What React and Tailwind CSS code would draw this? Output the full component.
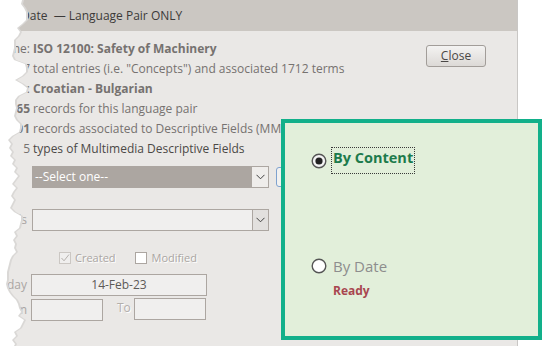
import React from 'react';

const edge = [
  [0, 22], [4, 21], [8, 24], [12, 26], [16, 26], [20, 26], [24, 22], [28, 17], [32, 20], [36, 18],
  [40, 14], [44, 14], [48, 14], [52, 13], [56, 12], [60, 14], [64, 25], [68, 26], [72, 26], [76, 22],
  [80, 15], [84, 22], [88, 27], [92, 26], [96, 18], [100, 15], [104, 15], [108, 16], [112, 15], [116, 14],
  [120, 16], [124, 20], [128, 20], [132, 19], [136, 12], [140, 8], [144, 11], [148, 9], [152, 12], [156, 10],
  [160, 14], [164, 12], [168, 16], [172, 14], [176, 18], [180, 15], [184, 12], [188, 16], [192, 13], [196, 11],
  [200, 14], [204, 12], [208, 10], [212, 14], [216, 21], [220, 21], [224, 20], [228, 19], [232, 14], [236, 16],
  [240, 13], [244, 15], [248, 14], [252, 16], [256, 12], [260, 10], [264, 9], [268, 8], [272, 7], [276, 7],
  [280, 7], [284, 6], [288, 7], [292, 9], [296, 12], [300, 16], [304, 18], [308, 19], [312, 21], [316, 18],
  [320, 24], [324, 22], [328, 20], [332, 14], [336, 16], [340, 12], [344, 15], [346, 14],
];

const tornPoints = (dx) =>
  ['0,0', ...edge.map(([y, x]) => `${x + dx},${y}`), '0,346'].join(' ');

// little chevron used in the combo boxes
const Chevron = () => (
  <svg width="9" height="6" viewBox="0 0 9 6">
    <polyline points="0.5,0.8 4.5,4.8 8.5,0.8" fill="none" stroke="#404040" strokeWidth="1" />
  </svg>
);

const Row = ({ label, labelBold, children, dark }) => (
  <div className="flex h-[20px] items-center whitespace-nowrap">
    <div className={`flex w-[30px] justify-end ${labelBold ? 'font-bold' : ''}`}>{label}</div>
    <div className={`pl-[3px] ${dark ? 'text-[#4b4847]' : ''}`}>{children}</div>
  </div>
);

const App = () => {
  return (
    <div className="relative h-[346px] w-[542px] overflow-hidden bg-white font-['Open_Sans',sans-serif]">
      {/* dialog */}
      <div className="flex h-[346px] w-[518px] flex-col border-r border-[#c9c7c5] bg-[#eae8e6]">
        <div className="flex h-[31px] shrink-0 items-center whitespace-nowrap bg-[#cbc7c2] pl-[21px] text-[12px] text-[#3c3a39]">
          Date &nbsp;— Language Pair ONLY
        </div>

        <div className="flex flex-1">
          <div className="flex-1 pt-[8px] text-[12px] text-[#767270]">
            <Row label="Name:">
              <span className="font-bold">ISO 12100: Safety of Machinery</span>
            </Row>
            <Row label="1047">total entries (i.e. "Concepts") and associated 1712 terms</Row>
            <Row label="Pair:">
              <span className="font-bold">Croatian - Bulgarian</span>
            </Row>
            <Row label="865" labelBold>records for this language pair</Row>
            <Row label="101" labelBold>records associated to Descriptive Fields (MM objects)</Row>
            <Row label="5" dark>types of Multimedia Descriptive Fields</Row>

            <div className="ml-[32px] mt-[7px] flex items-center">
              <div className="flex h-[22px] w-[237px] items-center justify-between border border-[#aca6a1] bg-[#aca6a1] pl-[2px] text-white">
                <span>--Select one--</span>
                <div className="flex h-[20px] w-[16px] items-center justify-center bg-[#efedeb]">
                  <Chevron />
                </div>
              </div>
              <div className="ml-[7px] h-[20px] w-[20px] rounded-[3px] border border-[#7fa2cf] bg-[#f2f1f0]" />
            </div>

            <div className="mt-[21px] flex items-center">
              <div className="flex w-[27px] justify-end text-[#a9a5a2]">Fields</div>
              <div className="ml-[5px] flex h-[22px] w-[237px] items-center justify-end border border-[#aca6a1] bg-[#f0efee]">
                <div className="flex h-[20px] w-[16px] items-center justify-center border-l border-[#aca6a1] bg-[#e2e0de]">
                  <Chevron />
                </div>
              </div>
            </div>

            <div className="mt-[21px] flex h-[12px] items-center text-[11px] text-[#aaa6a3] [text-shadow:1px_1px_0_#ffffff]">
              <div className="ml-[59px] flex h-[12px] w-[12px] items-center justify-center border border-[#cbc7c3] bg-[#f0efee]">
                <svg width="10" height="10" viewBox="0 0 10 10">
                  <polyline points="1.5,5 4,7.8 9,1.5" fill="none" stroke="#b5b1ad" strokeWidth="1" />
                </svg>
              </div>
              <span className="ml-[4px]">Created</span>
              <div className="ml-[19px] h-[12px] w-[12px] border border-[#aca6a1] bg-white" />
              <span className="ml-[5px]">Modified</span>
            </div>

            <div className="mt-[10px] flex items-center">
              <div className="flex w-[27px] justify-end text-[#aaa6a3]">Today</div>
              <div className="ml-[4px] flex h-[22px] w-[176px] items-center justify-center border border-[#aca6a1] bg-[#f0efee] text-[#5d5a58]">
                14-Feb-23
              </div>
            </div>

            <div className="mt-[3px] flex items-start">
              <div className="flex h-[22px] w-[27px] items-center justify-end text-[#aaa6a3]">From</div>
              <div className="ml-[4px] h-[22px] w-[72px] border border-[#aca6a1] bg-[#f0efee]" />
              <div className="ml-[14px] flex h-[18px] items-center text-[#b3afab] [text-shadow:1px_1px_0_#ffffff]">To</div>
              <div className="ml-[3px] -mt-px h-[22px] w-[72px] border border-[#aca6a1] bg-[#f0efee]" />
            </div>
          </div>

          <div className="pr-[31px] pt-[11px]">
            <button className="h-[22px] w-[60px] rounded-[3px] border border-[#a29d99] bg-gradient-to-b from-[#f4f3f2] to-[#dcd9d6] text-[12px] text-[#4a4746]">
              <span className="underline">C</span>lose
            </button>
          </div>
        </div>
      </div>

      {/* torn left edge */}
      <svg className="absolute left-0 top-0" width="40" height="346" viewBox="0 0 40 346">
        <polygon points={tornPoints(2)} fill="#dad8d6" />
        <polygon points={tornPoints(0)} fill="#ffffff" />
      </svg>

      {/* highlighted option box */}
      <div className="absolute left-[281px] top-[119px] h-[221px] w-[261px] border-4 border-[#12b08a] bg-[#e2efda]">
        <div className="ml-[26px] mt-[24px] flex items-center">
          <svg width="16" height="16" viewBox="0 0 16 16">
            <circle cx="8" cy="8" r="6.8" fill="#f4f4f4" stroke="#555555" strokeWidth="1.4" />
            <circle cx="8" cy="8" r="3.6" fill="#222222" />
          </svg>
          <div className="ml-[4px] border border-dotted border-[#3a3a3a] px-[1px] pb-[6px] pt-[1px] text-[14.5px] font-bold leading-[18px] text-[#1d7b4c]">
            By Content
          </div>
        </div>

        <div className="ml-[26px] mt-[81px] flex items-center">
          <svg width="16" height="16" viewBox="0 0 16 16">
            <circle cx="8" cy="8" r="6.8" fill="#ffffff" stroke="#555555" strokeWidth="1.4" />
          </svg>
          <span className="ml-[6px] text-[15px] text-[#8d8d8d]">By Date</span>
        </div>
        <div className="ml-[48px] mt-[4px] text-[12px] font-bold text-[#a8464f]">Ready</div>
      </div>
    </div>
  );
};

export default App;
